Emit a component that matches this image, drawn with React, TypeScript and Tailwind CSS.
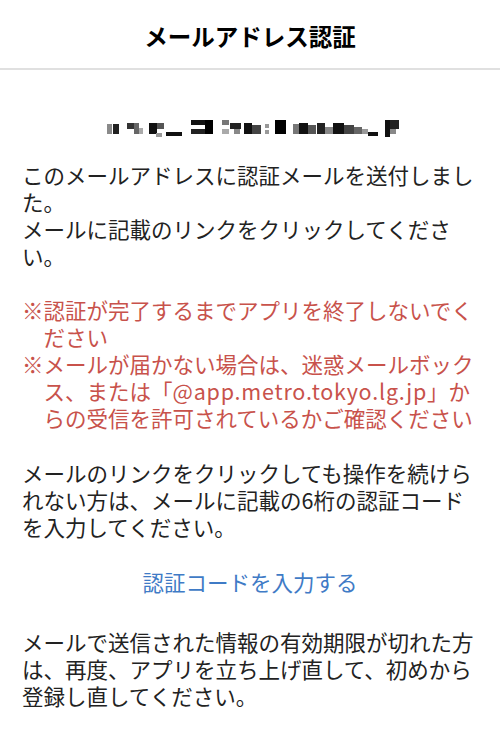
import React from 'react';

const font = { fontFamily: '"Noto Sans CJK JP", "Noto Sans", sans-serif' };

// pixelated (mosaic) email address: [x, y, w, h, shade]
const mosaic: [number, number, number, number, string][] = [
  [0, 4, 5, 10, '#8a8a8a'],
  [6, 4, 6, 10, '#222'],
  [20, 3, 7, 6, '#333'],
  [27, 3, 5, 11, '#666'],
  [32, 8, 4, 6, '#aaa'],
  [42, 3, 8, 11, '#111'],
  [50, 3, 7, 6, '#555'],
  [49, 13, 6, 4, '#999'],
  [59, 12, 16, 4, '#111'],
  [84, 0, 14, 5, '#111'],
  [84, 9, 14, 5, '#222'],
  [98, 0, 8, 14, '#000'],
  [115, 0, 7, 5, '#777'],
  [115, 9, 7, 5, '#aaa'],
  [123, 3, 11, 6, '#222'],
  [127, 9, 6, 5, '#888'],
  [137, 3, 8, 11, '#111'],
  [145, 5, 9, 9, '#444'],
  [158, 4, 4, 4, '#999'],
  [158, 10, 4, 4, '#999'],
  [168, 0, 11, 14, '#000'],
  [186, 4, 6, 10, '#777'],
  [192, 3, 9, 11, '#111'],
  [201, 5, 8, 9, '#555'],
  [210, 3, 8, 11, '#222'],
  [218, 7, 8, 7, '#888'],
  [226, 3, 11, 11, '#111'],
  [237, 5, 10, 9, '#444'],
  [247, 7, 8, 7, '#666'],
  [255, 9, 6, 5, '#999'],
  [261, 12, 10, 4, '#111'],
  [278, 0, 5, 17, '#111'],
  [283, 0, 9, 9, '#222'],
  [283, 9, 6, 5, '#888'],
];

const Mosaic: React.FC = () => (
  <svg width="292" height="17" viewBox="0 0 292 17" className="block">
    {mosaic.map(([x, y, w, h, c], i) => (
      <rect key={i} x={x} y={y} width={w} height={h} fill={c} />
    ))}
  </svg>
);

export default function App() {
  return (
    <div className="w-[500px] min-h-[748px] bg-white text-[#222]" style={font}>
      <header className="h-[70px] pt-[6px] flex items-center justify-center border-b-2 border-[#e0e0e0]">
        <h1 className="text-[23.5px] font-bold text-black">メールアドレス認証</h1>
      </header>

      <div className="px-[22px] text-[21.5px] leading-[27px]">
        <div className="mt-[50px] flex justify-center pl-[6px]">
          <Mosaic />
        </div>

        <p className="mt-[24px]">
          このメールアドレスに認証メールを送付しました。
          <br />
          メールに記載のリンクをクリックしてください。
        </p>

        <ul className="mt-[27px] text-[#c8524b]">
          <li className="pl-[1em] -indent-[1em]">※認証が完了するまでアプリを終了しないでください</li>
          <li className="pl-[1em] -indent-[1em]">
            ※メールが届かない場合は、迷惑メールボックス、または「
            <span className="tracking-[0.8px]">@app.metro.tokyo.lg.jp</span>
            」からの受信を許可されているかご確認ください
          </li>
        </ul>

        <p className="mt-[28px]">
          メールのリンクをクリックしても操作を続けられない方は、メールに記載の6桁の認証コードを入力してください。
        </p>

        <div className="mt-[28px] text-center">
          <button className="text-[#3f7bc6]">認証コードを入力する</button>
        </div>

        <p className="mt-[33px]">
          メールで送信された情報の有効期限が切れた方は、再度、アプリを立ち上げ直して、初めから登録し直してください。
        </p>
      </div>
    </div>
  );
}
